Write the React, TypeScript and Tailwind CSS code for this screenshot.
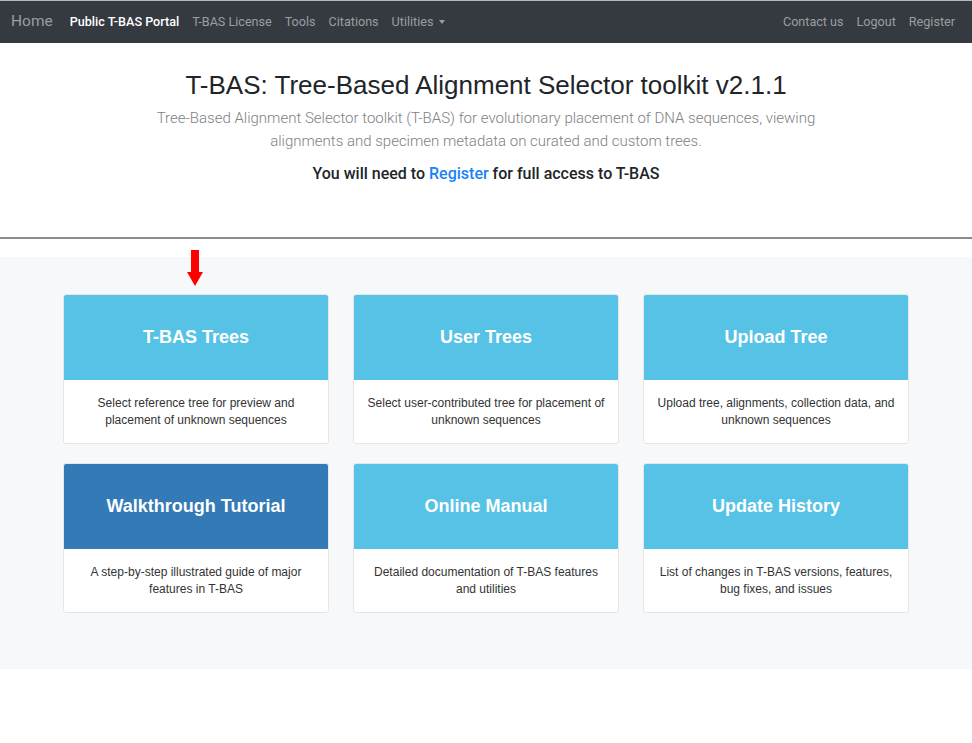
import React from 'react';

const cards = [
  { title: 'T-BAS Trees', text: 'Select reference tree for preview and placement of unknown sequences', dark: false },
  { title: 'User Trees', text: 'Select user-contributed tree for placement of unknown sequences', dark: false },
  { title: 'Upload Tree', text: 'Upload tree, alignments, collection data, and unknown sequences', dark: false },
  { title: 'Walkthrough Tutorial', text: 'A step-by-step illustrated guide of major features in T-BAS', dark: true },
  { title: 'Online Manual', text: 'Detailed documentation of T-BAS features and utilities', dark: false },
  { title: 'Update History', text: 'List of changes in T-BAS versions, features, bug fixes, and issues', dark: false },
];

function Card({ title, text, dark }: { title: string; text: string; dark: boolean }) {
  return (
    <div className="flex flex-col overflow-hidden rounded-[3px] border border-[#e4e6e8] bg-white">
      <div
        className={`flex h-[85px] items-center justify-center text-[18px] font-bold text-white ${
          dark ? 'bg-[#337ab7]' : 'bg-[#56c3e6]'
        }`}
      >
        {title}
      </div>
      <div className="flex h-[63px] items-center justify-center px-[10px] text-center text-[12px] leading-[17px] text-[#333]">
        {text}
      </div>
    </div>
  );
}

function App() {
  return (
    <div className="min-h-screen bg-white font-['Liberation_Sans',Arial,sans-serif]">
      <nav className="flex h-[43px] items-center justify-between border-t border-[#b8b8b8] bg-[#343a40] pl-[11px] pr-[17px] font-['Roboto',sans-serif] text-[12.6px] text-[#9b9ea1]">
        <div className="flex items-center">
          <span className="mr-[17px] text-[15.5px] text-[#9a9da0]">Home</span>
          <div className="flex items-center gap-[13px]">
            <span className="font-medium text-white">Public T-BAS Portal</span>
            <span>T-BAS License</span>
            <span>Tools</span>
            <span>Citations</span>
            <span className="flex items-center gap-[6px]">
              Utilities
              <span className="mt-[1px] h-0 w-0 border-x-[3.5px] border-t-[4px] border-x-transparent border-t-[#9b9ea1]" />
            </span>
          </div>
        </div>
        <div className="flex items-center gap-[13px]">
          <span>Contact us</span>
          <span>Logout</span>
          <span>Register</span>
        </div>
      </nav>

      <header className="flex flex-col items-center pt-[26px] text-center">
        <h1 className="text-[26px] leading-[32px] text-[#212529]">T-BAS: Tree-Based Alignment Selector toolkit v2.1.1</h1>
        <p className="mt-[6px] w-[700px] font-['Roboto',sans-serif] text-[15px] leading-[23px] font-light text-[#7d8185]">
          Tree-Based Alignment Selector toolkit (T-BAS) for evolutionary placement of DNA sequences, viewing alignments and
          specimen metadata on curated and custom trees.
        </p>
        <p className="mt-[9px] font-['Roboto',sans-serif] text-[16px] leading-[24px] font-medium text-[#212529]">
          You will need to <span className="text-[#1a82f7]">Register</span> for full access to T-BAS
        </p>
      </header>

      <div className="mt-[51px] h-[2px] bg-[#8c8c8c]" />

      <section className="mt-[18px] bg-[#f7f8fa] pt-[37px] pb-[56px]">
        <div className="relative mx-auto w-[846px]">
          <div className="absolute top-[-44px] left-[123px] flex w-[18px] flex-col items-center">
            <div className="h-[22px] w-[8px] bg-[#ff0000]" />
            <div className="h-0 w-0 border-x-[8px] border-t-[14px] border-x-transparent border-t-[#ff0000]" />
          </div>
          <div className="grid grid-cols-3 gap-x-[24px] gap-y-[19px]">
            {cards.map((c) => (
              <Card key={c.title} {...c} />
            ))}
          </div>
        </div>
      </section>
    </div>
  );
}

export default App;
